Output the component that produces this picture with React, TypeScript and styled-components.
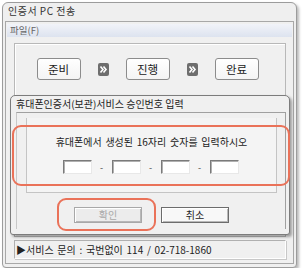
import styled, { createGlobalStyle } from 'styled-components';

const GlobalStyle = createGlobalStyle`
  html, body {
    margin: 0;
    padding: 0;
    background: #ffffff;
  }
  body {
    font-family: 'Noto Sans CJK KR', 'Liberation Sans', sans-serif;
    color: #222;
  }
`;

const steps = ['준비', '진행', '완료'];

const Chevron = () => (
  <ArrowBox>
    <svg width="11" height="13" viewBox="0 0 11 13">
      <rect x="0" y="0" width="11" height="13" rx="2" fill="#6e6e6e" />
      <path d="M2.5 3.5 L5 6.5 L2.5 9.5 M5.5 3.5 L8 6.5 L5.5 9.5" stroke="#fff" strokeWidth="1.6" fill="none" />
    </svg>
  </ArrowBox>
);

const App = () => (
  <>
    <GlobalStyle />
    <Window>
      <TitleBar>인증서 PC 전송</TitleBar>
      <Frame>
        <MenuBar>파일(F)</MenuBar>
        <StepPanel>
          <StepRow>
            {steps.map((s, i) => (
              <StepGroup key={s}>
                {i > 0 && <Chevron />}
                <StepButton>{s}</StepButton>
              </StepGroup>
            ))}
          </StepRow>
        </StepPanel>
        <StatusBox>▶서비스 문의 : 국번없이 114 / 02-718-1860</StatusBox>
      </Frame>

      <Dialog>
        <DialogTitle>휴대폰인증서(보관)서비스 승인번호 입력</DialogTitle>
        <DialogBody>
          <InnerBox>
            <Prompt>휴대폰에서 생성된 16자리 숫자를 입력하시오</Prompt>
            <CodeRow>
              {[0, 1, 2, 3].map((n) => (
                <CodeGroup key={n}>
                  {n > 0 && <Dash>-</Dash>}
                  <CodeInput />
                </CodeGroup>
              ))}
            </CodeRow>
          </InnerBox>
          <ButtonRow>
            <DlgButton disabled>확인</DlgButton>
            <DlgButton>취소</DlgButton>
          </ButtonRow>
        </DialogBody>
        <Highlight $left={1} $top={29} $w={279} $h={62} />
        <Highlight $left={46} $top={102} $w={100} $h={34} />
      </Dialog>
    </Window>
  </>
);

export default App;

const Window = styled.div`
  position: relative;
  margin: 2px 0 0 2px;
  width: 293px;
  height: 264px;
  border: 1px solid #9c9c9c;
  border-radius: 6px 6px 4px 4px;
  background: #efefef;
  box-shadow: 2px 2px 3px rgba(0, 0, 0, 0.28);
  display: flex;
  flex-direction: column;
`;

const TitleBar = styled.div`
  height: 18px;
  line-height: 16px;
  padding-left: 5px;
  font-size: 10px;
  letter-spacing: 0.5px;
  color: #333;
`;

const Frame = styled.div`
  flex: 1;
  margin: 0 2px 3px 2px;
  border: 1px solid #a8a8a8;
  background: #f0f0f0;
  display: flex;
  flex-direction: column;
`;

const MenuBar = styled.div`
  margin: 2px 1px 0 1px;
  height: 13px;
  line-height: 13px;
  padding-left: 3px;
  font-size: 9.5px;
  color: #666;
  background: linear-gradient(#f1f3f9, #dde3ef);
`;

const StepPanel = styled.div`
  flex: 1;
  margin: 6px 7px 0 8px;
  border: 1px solid #b8b8b8;
  box-shadow: inset 1px 1px 0 #ffffff;
`;

const StepRow = styled.div`
  display: flex;
  justify-content: center;
  padding: 14px 5px 0 0;
`;

const StepGroup = styled.div`
  display: flex;
  align-items: center;
  gap: 17px;
  margin-left: 17px;

  &:first-child {
    margin-left: 0;
  }
`;

const ArrowBox = styled.div`
  display: flex;
  width: 11px;
  height: 13px;
`;

const StepButton = styled.div`
  width: 42px;
  height: 20px;
  border: 1px solid #8c8c8c;
  border-radius: 3px;
  background: linear-gradient(#ffffff, #f4f4f4);
  display: flex;
  align-items: center;
  justify-content: center;
  font-size: 11.5px;
  color: #222;
`;

const StatusBox = styled.div`
  margin: 3px 7px 4px 8px;
  height: 17px;
  border: 1px solid #b0b0b0;
  border-right-color: #ffffff;
  border-bottom-color: #ffffff;
  box-shadow: 1px 1px 0 #c8c8c8;
  padding-left: 1px;
  font-size: 10px;
  line-height: 17px;
  word-spacing: 1.5px;
  color: #222;
`;

const Dialog = styled.div`
  position: absolute;
  left: 7px;
  top: 92px;
  width: 278px;
  height: 138px;
  border: 1px solid #7c7c7c;
  border-radius: 5px 5px 3px 3px;
  background: #f0f0f0;
  box-shadow: 2px 2px 3px rgba(0, 0, 0, 0.35);
  display: flex;
  flex-direction: column;
`;

const DialogTitle = styled.div`
  height: 16px;
  line-height: 16px;
  padding-left: 5px;
  font-size: 10px;
  color: #222;
`;

const DialogBody = styled.div`
  flex: 1;
  margin: 0 3px 5px 5px;
  border-top: 1px solid #a0a0a0;
  border-right: 1px solid #a0a0a0;
  border-left: 1px solid #c8c8c8;
  padding: 5px 8px 0 9px;
  display: flex;
  flex-direction: column;
`;

const InnerBox = styled.div`
  height: 74px;
  border: 1px solid #c4c4c4;
  border-top: none;
  background: #f4f4f4;
  display: flex;
  flex-direction: column;
  align-items: center;
`;

const Prompt = styled.div`
  margin-top: 17px;
  font-size: 10px;
  line-height: 14px;
  color: #222;
  word-spacing: 1.5px;
`;

const CodeRow = styled.div`
  display: flex;
  margin-top: 11px;
  padding-right: 2px;
`;

const CodeGroup = styled.div`
  display: flex;
  align-items: center;
`;

const Dash = styled.span`
  width: 20px;
  text-align: center;
  font-size: 9px;
  color: #444;
`;

const CodeInput = styled.div`
  width: 27px;
  height: 12px;
  background: #ffffff;
  border: 1px solid;
  border-color: #7a7a7a #e8e8e8 #e8e8e8 #7a7a7a;
  box-shadow: inset 1px 1px 0 #b0b0b0;
`;

const ButtonRow = styled.div`
  display: flex;
  justify-content: center;
  gap: 19px;
  margin-top: 14px;
`;

const DlgButton = styled.button`
  width: 68px;
  height: 16px;
  padding: 0;
  border: 1px solid ${(p) => (p.disabled ? '#a8a8a8' : '#6c6c6c')};
  background: ${(p) => (p.disabled ? '#ececec' : '#f8f8f8')};
  box-shadow: inset 1px 1px 0 #ffffff, inset -1px -1px 0 #b8b8b8;
  font-family: 'Noto Sans CJK KR', sans-serif;
  font-size: 10px;
  line-height: 14px;
  color: ${(p) => (p.disabled ? '#a8a8a8' : '#222')};
`;

const Highlight = styled.div<{ $left: number; $top: number; $w: number; $h: number }>`
  position: absolute;
  left: ${(p) => p.$left}px;
  top: ${(p) => p.$top}px;
  width: ${(p) => p.$w - 5}px;
  height: ${(p) => p.$h - 5}px;
  border: 2.5px solid #ea7259;
  border-radius: 9px;
  pointer-events: none;
`;
